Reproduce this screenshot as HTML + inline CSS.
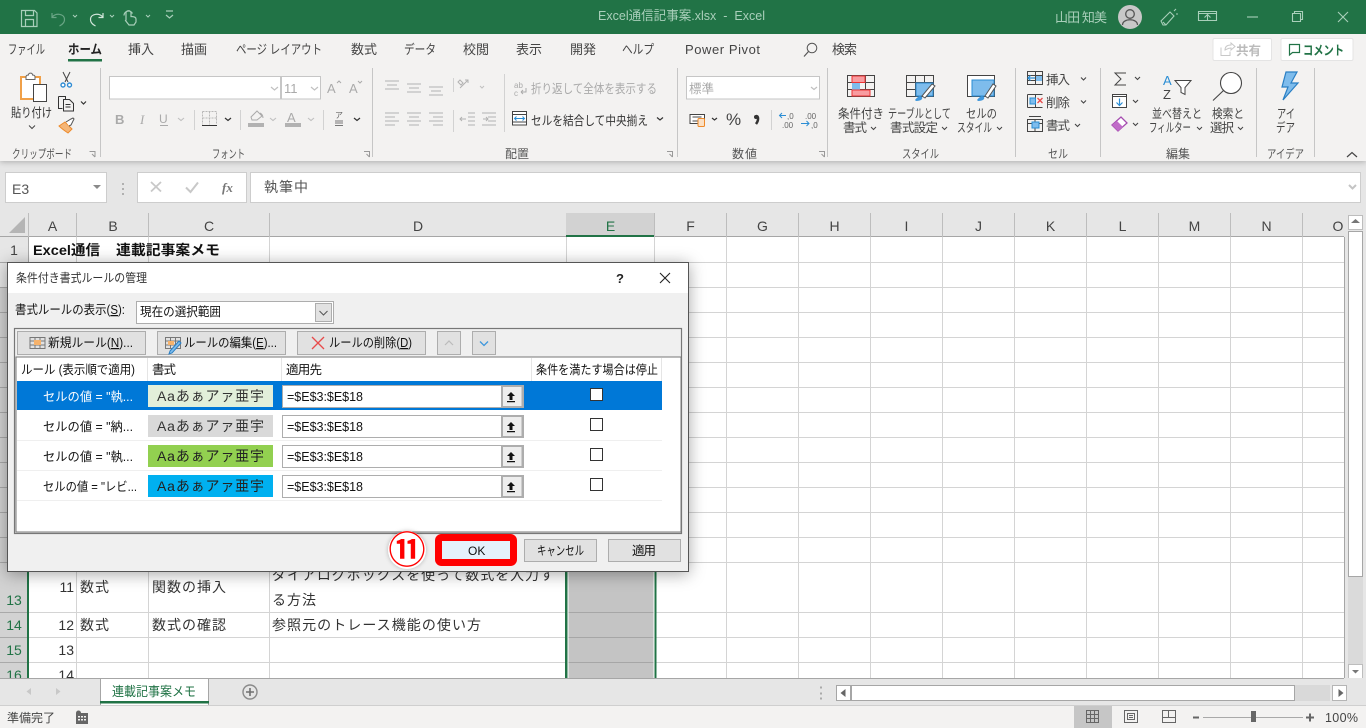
<!DOCTYPE html>
<html lang="ja"><head><meta charset="utf-8"><title>Excel通信記事案.xlsx - Excel</title>
<style>
html,body{margin:0;padding:0;width:1366px;height:728px;overflow:hidden;background:#e6e6e6}
svg{display:block}
text{font-family:"Liberation Sans","Noto Sans CJK JP",sans-serif;font-size:12px;fill:#444;white-space:pre}
.d{fill:#aaa;font-size:12.500px}.k{fill:#262626}.r{font-size:12.500px;fill:#444}.c{font-size:14px;fill:#333}.h{font-size:14px;fill:#444;text-anchor:middle}
.g{fill:#217346}.dl{fill:#111;font-size:12.500px}
.tt{fill:#a9cfba;font-size:13px}.tb{font-size:13px}.gl{font-size:12px;fill:#555}
</style></head><body>
<svg width="1366" height="728" viewBox="0 0 1366 728" xmlns="http://www.w3.org/2000/svg">
<rect width="1366" height="728" fill="#e6e6e6"/>
<!-- sheet -->
<rect x="29" y="237" width="1315" height="441" fill="#fff"/>
<rect x="568" y="287" width="86" height="391" fill="#c4c4c4"/>
<path d="M76.500 237V678M148.500 237V678M269.500 237V678M726.500 237V678M798.500 237V678M870.500 237V678M942.500 237V678M1014.500 237V678M1086.500 237V678M1158.500 237V678M1230.500 237V678M1302.500 237V678M566.500 237V287M654.500 237V287" stroke="#d4d4d4" fill="none"/>
<path d="M29 262.500H1344M29 287.500H1344M29 312.500H1344M29 337.500H1344M29 362.500H1344M29 387.500H1344M29 412.500H1344M29 437.500H1344M29 462.500H1344M29 487.500H1344M29 512.500H1344M29 537.500H1344M29 562.500H1344M29 612.500H1344M29 637.500H1344M29 662.500H1344" stroke="#d4d4d4" fill="none"/>
<path d="M568 562.500H654M568 612.500H654M568 637.500H654M568 662.500H654" stroke="#a6a6a6"/>
<rect x="565" y="287" width="2.500" height="391" fill="#217346"/><rect x="567.500" y="287" width="1" height="391" fill="#fff"/>
<rect x="653.500" y="287" width="1" height="391" fill="#fff"/><rect x="654.500" y="287" width="2" height="391" fill="#217346"/>
<!-- headers -->
<rect x="0" y="213" width="1344" height="24" fill="#e6e6e6"/>
<rect x="566" y="213" width="88" height="24" fill="#d2d2d2"/>
<rect x="566" y="235" width="89" height="2" fill="#217346"/>
<path d="M0 236.500H566M655 236.500H1344" stroke="#a6a6a6"/>
<path d="M28.500 213V237M76.500 213V237M148.500 213V237M269.500 213V237M654.500 213V237M726.500 213V237M798.500 213V237M870.500 213V237M942.500 213V237M1014.500 213V237M1086.500 213V237M1158.500 213V237M1230.500 213V237M1302.500 213V237" stroke="#bdbdbd"/>
<path d="M25 217V233H9Z" fill="#b5b5b5"/>
<text class="h" x="52.500" y="231">A</text><text class="h" x="113" y="231">B</text><text class="h" x="209" y="231">C</text><text class="h" x="418" y="231">D</text><text class="h g" x="610.500" y="231" style="fill:#217346">E</text><text class="h" x="690.500" y="231">F</text><text class="h" x="762.500" y="231">G</text><text class="h" x="834.500" y="231">H</text><text class="h" x="906.500" y="231">I</text><text class="h" x="978.500" y="231">J</text><text class="h" x="1050.500" y="231">K</text><text class="h" x="1122.500" y="231">L</text><text class="h" x="1194.500" y="231">M</text><text class="h" x="1266.500" y="231">N</text><text class="h" x="1338" y="231">O</text>
<!-- row headers -->
<rect x="0" y="237" width="28" height="50" fill="#e6e6e6"/><rect x="0" y="287" width="27" height="391" fill="#d2d2d2"/><rect x="27" y="287" width="2" height="391" fill="#217346"/>
<path d="M0 262.500H28M0 287.500H27M0 312.500H27M0 337.500H27M0 362.500H27M0 387.500H27M0 412.500H27M0 437.500H27M0 462.500H27M0 487.500H27M0 512.500H27M0 537.500H27M0 562.500H27M0 612.500H27M0 637.500H27M0 662.500H27" stroke="#a9a9a9"/>
<path d="M28.500 237V287" stroke="#a9a9a9"/>
<text class="h" x="14" y="255">1</text>
<text class="h g" x="14" y="605" style="fill:#217346">13</text><text class="h" x="14" y="630" style="fill:#217346">14</text><text class="h" x="14" y="655" style="fill:#217346">15</text><text class="h" x="14" y="680" style="fill:#217346">16</text>
<!-- cells -->
<text x="33" y="255" font-weight="700" style="font-size:14px;fill:#111" textLength="67" lengthAdjust="spacingAndGlyphs">Excel通信</text>
<text x="116" y="255" font-weight="700" style="font-size:14px;fill:#111" textLength="104" lengthAdjust="spacingAndGlyphs">連載記事案メモ</text>
<text class="c" x="74" y="592" text-anchor="end">11</text><text class="c" x="80" y="592" textLength="29">数式</text><text class="c" x="152" y="592" textLength="74">関数の挿入</text>
<text class="c" x="272" y="580" textLength="282">ダイアログボックスを使って数式を入力す</text><text class="c" x="272" y="605" textLength="44">る方法</text>
<text class="c" x="74" y="630" text-anchor="end">12</text><text class="c" x="80" y="630" textLength="29">数式</text><text class="c" x="152" y="630" textLength="74">数式の確認</text><text class="c" x="272" y="630" textLength="209">参照元のトレース機能の使い方</text>
<text class="c" x="74" y="655" text-anchor="end">13</text><text class="c" x="74" y="680" text-anchor="end">14</text>
<!-- right edge + v scrollbar -->
<rect x="1344" y="213" width="22" height="493" fill="#e6e6e6"/>
<path d="M1344.500 237V678" stroke="#a6a6a6"/>
<rect x="1348" y="231" width="15" height="434" fill="#dadada"/>
<rect x="1348.500" y="215.500" width="14" height="14" fill="#fff" stroke="#bdbdbd"/><path d="M1351 223L1355.500 219L1360 223Z" fill="#777"/>
<rect x="1348.500" y="231.500" width="14" height="345" fill="#fff" stroke="#a6a6a6"/>
<rect x="1348.500" y="664.500" width="14" height="14" fill="#fff" stroke="#bdbdbd"/><path d="M1352 670H1359L1355.500 673.500Z" fill="#777"/>
<!-- tab bar -->
<rect x="0" y="678" width="1366" height="28" fill="#e6e6e6"/>
<path d="M0 678.500H100M208 678.500H1344" stroke="#a6a6a6"/>
<path d="M31 688L26.500 691.500L31 695ZM56 688L60.500 691.500L56 695Z" fill="#c8c8c8"/>
<path d="M100.500 705V678.500H208.500V705" fill="#fff" stroke="#a6a6a6"/>
<rect x="100" y="701" width="109" height="2.500" fill="#217346"/>
<text x="112" y="696" style="fill:#217346;font-size:13px" textLength="84" lengthAdjust="spacingAndGlyphs">連載記事案メモ</text>
<circle cx="250" cy="692" r="7" fill="none" stroke="#8a8a8a" stroke-width="1.400"/><path d="M250 688V696M246 692H254" stroke="#707070" stroke-width="1.600"/>
<path d="M820 688h2v2h-2zM820 694h2v2h-2zM820 699h2v2h-2z" fill="#aaa" transform="translate(0,-1.500)"/>
<rect x="836.500" y="685.500" width="14" height="15" fill="#fff" stroke="#a6a6a6"/><path d="M845.500 689L840.500 693L845.500 697Z" fill="#666"/>
<rect x="851.500" y="685.500" width="443" height="15" fill="#fff" stroke="#a6a6a6"/>
<rect x="1295" y="685" width="35" height="16" fill="#d9d9d9"/>
<rect x="1332.500" y="685.500" width="14" height="15" fill="#fff" stroke="#b5b5b5"/><path d="M1338.500 689L1343.500 693L1338.500 697Z" fill="#666"/>
<!-- status -->
<rect x="0" y="706" width="1366" height="22" fill="#f3f2f1"/><path d="M0 705.500H1366" stroke="#cfcfcf"/>
<text x="7" y="722" textLength="48">準備完了</text>
<g fill="#666"><circle cx="78.500" cy="713" r="2.500"/><path d="M76 713h12v11H76zM78 716v1.500h2V716zm3 0v1.500h2V716zm3 0v1.500h2V716zM78 719v1.500h2V719zm3 0v1.500h2V719zm3 0v1.500h2V719z" fill-rule="evenodd"/></g>
<rect x="1074" y="706" width="38" height="22" fill="#c6c6c6"/>
<path d="M1086.500 710.500h12v12h-12zM1090.500 710.500v12M1094.500 710.500v12M1086.500 714.500h12M1086.500 718.500h12" fill="none" stroke="#666"/>
<path d="M1124.500 710.500h13v12h-13zM1127.500 713.500h7v6h-7zM1129 715.500h4M1129 717.500h4" fill="none" stroke="#666"/>
<path d="M1162.500 710.500h13v12h-13zM1168.500 710.500v7h7M1162.500 717.500h6" fill="none" stroke="#666"/>
<path d="M1193 717.500h6" stroke="#666" stroke-width="2"/><path d="M1203 717.500h100" stroke="#a9a9a9"/><rect x="1251" y="711" width="5" height="11" fill="#666"/>
<path d="M1306 717.500h8M1310 713.500v8" stroke="#666" stroke-width="2"/>
<text x="1325" y="722" style="font-size:12.500px" textLength="33">100%</text>
<!-- formula bar -->
<rect x="5.500" y="172.500" width="101" height="30" fill="#fff" stroke="#cdcdcd"/><text x="12" y="194" style="font-size:14px;fill:#555">E3</text><path d="M93 185h8l-4 4z" fill="#8a8a8a"/>
<path d="M122 183h2v2h-2zM122 188h2v2h-2zM122 193h2v2h-2z" fill="#b0b0b0"/>
<rect x="137.500" y="172.500" width="109" height="30" fill="#fff" stroke="#cdcdcd"/>
<path d="M151 182L161 191.500M161 182L151 191.500" stroke="#c8c8c8" stroke-width="1.800"/><path d="M186 187.500L190.500 192L198 182.500" stroke="#c8c8c8" stroke-width="2" fill="none"/>
<text x="222" y="192" style="font-family:'Liberation Serif',serif;font-size:13px;font-style:italic;font-weight:700;fill:#777">fx</text>
<rect x="250.500" y="172.500" width="1110" height="30" fill="#fff" stroke="#cdcdcd"/><text x="264" y="192" style="font-size:14px;fill:#555" textLength="44">執筆中</text>
<path d="M1349 185l3.500 3.500 3.500-3.500" stroke="#c4c4c4" stroke-width="2" fill="none"/>
<!-- ribbon -->
<rect x="0" y="34" width="1366" height="127" fill="#f3f2f1" style="filter:drop-shadow(0 1px 3px rgba(0,0,0,.25))"/>
<rect width="1366" height="34" fill="#217346"/>
<!-- titlebar icons -->
<g fill="none" stroke="#a9cfba" stroke-width="1.200">
<path d="M21.500 10.500h13l2.500 2.500v13.500h-15.500zM25.500 10.500v5h8v-5M25.500 26.500v-7h8v7"/>
<path d="M52 13l0 4.500h4.500M52 17.500c3-5 12-4 12.500 1.500.3 3-2 5.500-5 7" stroke="#6aa585"/>
<path d="M73 15l2 2 2-2M110 15l2 2 2-2M146 15l2 2 2-2" stroke-width="1"/>
<path d="M103 13v4.500h-4.500M103 17.500c-3-5-12-4-12.500 1.500-.3 3 2 5.500 5 7" stroke="#d2e6db"/>
<path d="M126 20v-7c0-3 5-3 5 0v3.500c3 0 5 .5 5 2.500v3l-2 3h-5l-3.500-4.500zM124 15.500a4.500 4.500 0 0 1 8.500-2"/>
<path d="M166 11h7M166 15l3.500 3 3.500-3"/>
</g>
<text class="tt" x="598" y="20" textLength="167" lengthAdjust="spacingAndGlyphs">Excel通信記事案.xlsx  -  Excel</text>
<text class="tt" x="1055" y="22" textLength="52">山田 知美</text>
<circle cx="1130" cy="17" r="12" fill="#c8c8c8"/><circle cx="1130" cy="14" r="4.300" fill="none" stroke="#555" stroke-width="1.300"/><path d="M1122.500 25c0-7 15-7 15 0" fill="none" stroke="#555" stroke-width="1.300"/>
<g fill="none" stroke="#a9cfba" stroke-width="1.100">
<path d="M1161 21l9-9 4 4-8 9-3 0zM1166 25l-3-3M1174 11l2-2M1176 14h2"/>
<path d="M1198.500 11.500h18v9h-18zM1198.500 13.500h18M1207.500 20.500v-5M1204.500 17.500l3-3 3 3"/>
<path d="M1247 17h11"/><path d="M1292.500 13.500h8v8h-8zM1294.500 13.500v-2h8v8h-2"/>
<path d="M1338 12l10 10M1348 12l-10 10"/></g>
<!-- tabs -->
<text class="tb" x="8" y="54" textLength="37" lengthAdjust="spacingAndGlyphs">ファイル</text>
<text class="tb" x="68" y="54" font-weight="700" style="fill:#222" textLength="34" lengthAdjust="spacingAndGlyphs">ホーム</text><rect x="68" y="59" width="34" height="2.500" fill="#217346"/>
<text class="tb" x="128" y="54" textLength="26">挿入</text><text class="tb" x="181" y="54" textLength="26">描画</text><text class="tb" x="236" y="54" textLength="86" lengthAdjust="spacingAndGlyphs">ページ レイアウト</text><text class="tb" x="351" y="54" textLength="26">数式</text><text class="tb" x="404" y="54" textLength="32" lengthAdjust="spacingAndGlyphs">データ</text><text class="tb" x="463" y="54" textLength="26">校閲</text><text class="tb" x="516" y="54" textLength="26">表示</text><text class="tb" x="570" y="54" textLength="26">開発</text><text class="tb" x="622" y="54" textLength="32" lengthAdjust="spacingAndGlyphs">ヘルプ</text><text class="tb" x="685" y="54" textLength="75">Power Pivot</text>
<circle cx="812" cy="48" r="4.800" fill="none" stroke="#555"/><path d="M808.500 51.500L804 56.500" stroke="#555" stroke-width="1.200"/>
<text class="tb" x="832" y="54" textLength="25">検索</text>
<rect x="1213" y="38.500" width="58.500" height="22" rx="1.500" fill="#fff" stroke="#e4e4e4"/><path d="M1221 47.500v8h9v-4M1225 50c0-4 3-5 6-5v-2l4 3.500-4 3.500v-2c-3 0-4 1-6 2z" fill="none" stroke="#c8c8c8"/><text x="1236" y="55" font-weight="700" textLength="25" style="fill:#bbb;font-size:12.500px">共有</text>
<rect x="1281" y="38.500" width="72" height="22" rx="1.500" fill="#fff" stroke="#e4e4e4"/><path d="M1289.500 44.500h10v8h-7l-3 2.500z" fill="none" stroke="#217346" stroke-width="1.200"/><text x="1303" y="55" font-weight="700" style="fill:#217346;font-size:13px" textLength="41" lengthAdjust="spacingAndGlyphs">コメント</text>
<!-- separators -->
<path d="M100.500 68V157M372.500 68V157M677.500 68V157M827.500 68V157M1015.500 68V157M1100.500 68V157M1256.500 68V157M1314.500 68V157" stroke="#c6c6c6"/>
<path d="M194.500 110V130M240.500 110V130M323.500 110V130M453.500 78V92M453.500 110V132M504.500 74V132M771.500 110V130" stroke="#d2d2d2"/>
<!-- group labels -->
<text class="gl" x="12" y="158" textLength="60" lengthAdjust="spacingAndGlyphs">クリップボード</text><text class="gl" x="212" y="158" textLength="33" lengthAdjust="spacingAndGlyphs">フォント</text><text class="gl" x="505" y="158" textLength="24">配置</text><text class="gl" x="732" y="158" textLength="25">数値</text><text class="gl" x="902" y="158" textLength="37" lengthAdjust="spacingAndGlyphs">スタイル</text><text class="gl" x="1048" y="158" textLength="20" lengthAdjust="spacingAndGlyphs">セル</text><text class="gl" x="1166" y="158" textLength="24">編集</text><text class="gl" x="1267" y="158" textLength="37" lengthAdjust="spacingAndGlyphs">アイデア</text>
<path d="M89.500 151.500h5.500v5.500M92 154l3 3M364 151.500h5.500v5.500M366.500 154l3 3M667 151.500h5.500v5.500M669.500 154l3 3M819 151.500h5.500v5.500M821.500 154l3 3" stroke="#999" fill="none"/>
<path d="M1347 157l5-4.500 5 4.500" stroke="#444" stroke-width="1.200" fill="none"/>
<!-- clipboard -->
<rect x="21" y="77" width="19" height="22" fill="#fff" stroke="#f0a048" stroke-width="2"/><path d="M26 77c0-2 1.500-2 2.500-2 0-2.500 4-2.500 4 0 1 0 2.500 0 2.500 2v2.500h-9z" fill="#fff" stroke="#666"/>
<rect x="33.500" y="84.500" width="13" height="17" fill="#fff" stroke="#444"/>
<text x="11" y="117" class="r" textLength="41" lengthAdjust="spacingAndGlyphs" style="fill:#333">貼り付け</text>
<path d="M29 125.500l3 3 3-3" fill="none" stroke="#444"/>
<path d="M63 72l5 10M70 72l-5 10" stroke="#444" fill="none"/><circle cx="63" cy="85" r="2" fill="#fff" stroke="#2e8bd3" stroke-width="1.400"/><circle cx="69.500" cy="85" r="2" fill="#fff" stroke="#2e8bd3" stroke-width="1.400"/>
<path d="M58.500 96.500h7v3M58.500 96.500v12h4M63.500 99.500h6l4 4v7.500h-10zM65.500 104.500h5M65.500 107h5" fill="none" stroke="#333"/>
<path d="M81 101.500l2.500 2.500 2.500-2.500" fill="none" stroke="#333" stroke-width="1.200"/>
<path d="M59 126l6-4 7 7-4 4c-3-2-6-4-9-7z" fill="#f4b678" stroke="#ee8a2a"/><path d="M66 122l5-3 2-1 1 1-1 2-2 4-2 1" fill="#fff" stroke="#555"/>
<!-- font -->
<rect x="109.500" y="76.500" width="171" height="22.500" fill="#fff" stroke="#c6c6c6"/><rect x="281.500" y="76.500" width="39" height="22.500" fill="#fff" stroke="#c6c6c6"/>
<path d="M271 87l3.500 3 3.500-3M311 87l3.500 3 3.500-3" fill="none" stroke="#c0c0c0" stroke-width="1.200"/>
<text x="284" y="93" style="font-size:13px;fill:#aaa">11</text>
<text x="327" y="93" style="font-size:13px;fill:#aaa">A</text><text x="349" y="93" style="font-size:13px;fill:#aaa">A</text>
<path d="M337 83l2-2 2 2M358 81l2 2 2-2" fill="none" stroke="#aaa"/>
<text x="115" y="124" font-weight="700" style="font-size:13px;fill:#aaa">B</text><text x="140" y="124" style="font-size:13px;font-style:italic;font-family:'Liberation Serif',serif;fill:#aaa">I</text><text x="159" y="123" style="font-size:12px;fill:#aaa">U</text><path d="M160 125.500h8" stroke="#aaa"/>
<path d="M178 118l3 2.500 3-2.500M270 118l3 2.500 3-2.500M308 118l3 2.500 3-2.500" fill="none" stroke="#c0c0c0" stroke-width="1.100"/>
<path d="M202.500 111.500h14v13M202.500 111.500v13M209.500 111.500v13M202.500 118h14" fill="none" stroke="#b8b8b8" stroke-dasharray="2 1"/><path d="M202 125.500h15" stroke="#333"/>
<path d="M225 118l3 2.500 3-2.500M354 118l3 2.500 3-2.500" fill="none" stroke="#333" stroke-width="1.200"/>
<path d="M251 117l6-6 5 5-5 4h-5zM260 113c2 1 3 3 3 5" fill="none" stroke="#aaa"/><rect x="248" y="123" width="16" height="4" fill="#b2b2b2"/>
<text x="287" y="122" style="font-size:13px;fill:#aaa">A</text><rect x="285" y="123" width="16" height="4" fill="#b2b2b2"/>
<text x="335" y="118" style="font-size:8px;fill:#666">ア</text><path d="M335 121h8M335 123h8M335 125.500h8" stroke="#777"/>
<!-- align -->
<path d="M385 81h14M387 85h10M385 89h14M407 84h14M409 88h10M407 92h14M429 87h14M431 91h10M429 95h14M385 113h14M385 117h10M385 121h14M385 125h10M407 113h14M409 117h10M407 121h14M409 125h10M429 113h14M433 117h10M429 121h14M433 125h10M468 113h7M468 117h7M468 121h7M468 125h7M482 113h14M488 117h8M488 121h8M482 125h14" stroke="#b2b2b2"/>
<path d="M460 88l8-8M465 80h3v3M460 80l3 3-2 2-3-3z" stroke="#b2b2b2" fill="none"/><path d="M480 86l2 2 2-2" stroke="#c0c0c0" fill="none"/>
<path d="M466 119h-6M462 117l-2 2 2 2M483 119h5M486 117l2 2-2 2" stroke="#b2b2b2" fill="none"/>
<text x="514" y="88" style="font-size:8px;fill:#aaa">ab</text><text x="514" y="96" style="font-size:8px;fill:#aaa">c</text><path d="M521 92h5v-4M521 92l2-2M521 92l2 2" stroke="#aaa" fill="none"/>
<text x="531" y="93" class="d" textLength="126" lengthAdjust="spacingAndGlyphs">折り返して全体を表示する</text>
<rect x="512.500" y="111.500" width="14" height="13.500" fill="#fff" stroke="#444"/><path d="M513 114.500h13M513 122h13" stroke="#444"/><path d="M514.500 118.500h10M516.500 116.500l-2 2 2 2M522.500 116.500l2 2-2 2" stroke="#2a8dd4" fill="none"/>
<text x="531" y="125" class="r" style="fill:#333" textLength="117" lengthAdjust="spacingAndGlyphs">セルを結合して中央揃え</text>
<path d="M657 117.500l3 2.500 3-2.500" fill="none" stroke="#333" stroke-width="1.200"/>
<!-- number -->
<rect x="686.500" y="76.500" width="133" height="22.500" fill="#fff" stroke="#c6c6c6"/><text x="689" y="93" class="d" textLength="25">標準</text><path d="M811 87l3 2.500 3-2.500" fill="none" stroke="#c0c0c0" stroke-width="1.200"/>
<rect x="690" y="114.500" width="14.500" height="9" fill="#fff" stroke="#444"/><path d="M692.500 117h9M692.500 121h5" stroke="#444"/><rect x="697.500" y="119" width="7" height="7.500" fill="#fff"/><rect x="698" y="118.500" width="6.500" height="8" rx="1" fill="#fbe0c4" stroke="#ee8a2a"/>
<path d="M712 118l2.500 2 2.500-2" fill="none" stroke="#333" stroke-width="1.200"/>
<text x="726" y="125" style="font-size:17px;fill:#444">%</text>
<path d="M756 116c2.500 0 3 4 0 8" fill="none" stroke="#333" stroke-width="2.500"/><circle cx="756" cy="117" r="2" fill="#333"/>
<text x="787" y="119" style="font-size:8px;fill:#666">,0</text><text x="782" y="128" style="font-size:8px;fill:#666">.00</text><path d="M786 115.500h-6M782 113l-2.500 2.500 2.500 2.500" fill="none" stroke="#2a8dd4"/>
<text x="805" y="119" style="font-size:8px;fill:#666">.00</text><text x="811" y="128" style="font-size:8px;fill:#666">,0</text><path d="M801 123.500h8M806.500 121l2.500 2.500-2.500 2.500" fill="none" stroke="#2a8dd4"/>
<!-- conditional -->
<path d="M847.500 75.500h27v21h-27zM847.500 82.500h27M847.500 89.500h27M856.500 75.500v21M865.500 75.500v21" fill="none" stroke="#444"/><rect x="852" y="76" width="13" height="6.500" fill="#f89ca0" stroke="#e33"/><rect x="852" y="83" width="8" height="6.500" fill="#7ebcec"/><rect x="852" y="90" width="18" height="6" fill="#f89ca0" stroke="#e33"/>
<text x="838" y="118" class="r" textLength="46" lengthAdjust="spacingAndGlyphs">条件付き</text><text x="843" y="132" class="r" textLength="24">書式</text><path d="M871 127l2.500 2.500 2.500-2.500M942 127l2.500 2.500 2.500-2.500M997 127l2.500 2.500 2.500-2.500M1197 127l2.500 2.500 2.500-2.500M1238 127l2.500 2.500 2.500-2.500" fill="none" stroke="#444"/>
<!-- table -->
<path d="M906.500 75.500h27v21h-27zM906.500 82.500h27M906.500 89.500h27M915.500 75.500v21M924.500 75.500v21" fill="none" stroke="#444"/><rect x="916" y="83" width="17" height="13" fill="#7ebcec" stroke="#2a8dd4"/><path d="M922 96l10-12 3 2-10 12z" fill="#fff" stroke="#555"/><path d="M915 100c3-4 5-4 7-3 1 2-1 4-6 4z" fill="#3f97dc"/>
<text x="888" y="118" class="r" textLength="63" lengthAdjust="spacingAndGlyphs">テーブルとして</text><text x="890" y="132" class="r" textLength="48">書式設定</text>
<!-- cell style -->
<rect x="967.500" y="75.500" width="27" height="21" fill="#fff" stroke="#444"/><rect x="972" y="80" width="22" height="16" fill="#7ebcec" stroke="#2a8dd4"/><path d="M985 96l8-12 3 2-8 12z" fill="#fff" stroke="#555"/><path d="M977 100c3-4 5-4 7-3 1 2-1 4-6 4z" fill="#3f97dc"/>
<text x="966" y="118" class="r" textLength="31" lengthAdjust="spacingAndGlyphs">セルの</text><text x="957" y="132" class="r" textLength="35" lengthAdjust="spacingAndGlyphs">スタイル</text>
<!-- cells group -->
<path d="M1027.500 71.500h15v13h-15zM1027.500 75.500h15M1027.500 80.500h15M1035.500 71.500v13" fill="none" stroke="#444"/><rect x="1036" y="76" width="6" height="5" fill="#7ebcec"/><path d="M1035 78h-7M1030.500 75.500l-2.500 2.500 2.500 2.500" fill="none" stroke="#2a8dd4" stroke-width="1.200"/>
<text x="1046" y="84" class="r" textLength="24">挿入</text><path d="M1081 77.500l2.500 2.500 2.500-2.500M1081 100.500l2.500 2.500 2.500-2.500M1075 124l2.500 2.500 2.500-2.500" fill="none" stroke="#444" stroke-width="1.100"/>
<path d="M1027.500 94.500h15M1027.500 107.500h15M1027.500 94.500v13M1035.500 94.500v3M1035.500 104.500v3" fill="none" stroke="#444"/><rect x="1030" y="98" width="5.500" height="6" fill="#7ebcec" stroke="#2a8dd4"/><path d="M1037.500 98l5 5M1042.500 98l-5 5" stroke="#e84a4a" stroke-width="1.300"/>
<text x="1046" y="107" class="r" textLength="24">削除</text>
<path d="M1027.500 119.500h15v12h-15zM1027.500 123.500h15M1035 119.500v12M1029 116.500h12" fill="none" stroke="#444"/><rect x="1032" y="122" width="7" height="6" fill="#7ebcec" stroke="#2a8dd4"/>
<text x="1046" y="130" class="r" textLength="24">書式</text>
<!-- edit -->
<path d="M1126 73h-11l6 6-6 6h11" fill="none" stroke="#444"/><path d="M1135 77l2.500 2.500 2.500-2.500M1133 100l2.500 2.500 2.500-2.500M1133 123l2.500 2.500 2.500-2.500" fill="none" stroke="#444" stroke-width="1.100"/>
<rect x="1112.500" y="94.500" width="14" height="13" fill="#fff" stroke="#444"/><path d="M1112.500 96.500h14" stroke="#444"/><path d="M1119.500 98.500v7M1116.500 102.500l3 3 3-3" fill="none" stroke="#2a8dd4" stroke-width="1.200"/>
<path d="M1112 125l9-8 6 6-9 8z" fill="#fff" stroke="#a54cb0" stroke-width="1.300"/><path d="M1112 125l5-4 6 6-5 4z" fill="#c06cc8"/>
<text x="1163" y="85" style="font-size:13px;fill:#2a8dd4">A</text><text x="1163" y="99" style="font-size:13px;fill:#444">Z</text>
<path d="M1175 80.500h16l-6 7v7l-4-2v-5z" fill="#fff" stroke="#444"/>
<text x="1152" y="118" class="r" textLength="50" lengthAdjust="spacingAndGlyphs">並べ替えと</text><text x="1149" y="132" class="r" textLength="42" lengthAdjust="spacingAndGlyphs">フィルター</text>
<circle cx="1231" cy="83" r="10.500" fill="#fff" stroke="#444" stroke-width="1.100"/><path d="M1223.500 90.500L1213 100.500" stroke="#444" stroke-width="1.100"/>
<text x="1212" y="118" class="r" textLength="32" lengthAdjust="spacingAndGlyphs">検索と</text><text x="1210" y="132" class="r" textLength="24">選択</text>
<path d="M1286 72h11l-6 11h7l-15 17 5-13h-6z" fill="#7ebcec" stroke="#2a7fc4" stroke-width="1.200"/>
<text x="1277" y="118" class="r" textLength="18" lengthAdjust="spacingAndGlyphs">アイ</text><text x="1276" y="132" class="r" textLength="19" lengthAdjust="spacingAndGlyphs">デア</text>
<!-- dialog -->
<g style="filter:drop-shadow(0 2px 8px rgba(0,0,0,.35))"><rect x="7.500" y="262.500" width="681" height="309" fill="#f0f0f0" stroke="#555"/></g>
<rect x="8" y="263" width="680" height="30" fill="#fff"/>
<text x="16" y="282" style="font-size:12px;fill:#333" textLength="131" lengthAdjust="spacingAndGlyphs">条件付き書式ルールの管理</text>
<text x="616" y="283" style="font-size:13px;fill:#222" font-weight="700">?</text><path d="M660 273l10 10M670 273l-10 10" stroke="#222" stroke-width="1.100"/>
<text x="15" y="314" class="dl" textLength="110" lengthAdjust="spacingAndGlyphs">書式ルールの表示(<tspan text-decoration="underline">S</tspan>):</text>
<rect x="136.500" y="301.500" width="197" height="22" fill="#fff" stroke="#adadad"/><text x="140" y="316" class="dl" textLength="81" lengthAdjust="spacingAndGlyphs">現在の選択範囲</text>
<rect x="315.500" y="303.500" width="16" height="18" fill="#e2e2e2" stroke="#adadad"/><path d="M319.500 311l4 4 4-4" fill="none" stroke="#555"/>
<rect x="14.500" y="328.500" width="667" height="205" fill="#f0f0f0" stroke="#777" stroke-width="1.200"/>
<rect x="16" y="357" width="665" height="175" fill="#fff" stroke="#777" stroke-width="1"/>
<g fill="#e1e1e1" stroke="#adadad"><rect x="17.500" y="331.500" width="128" height="23"/><rect x="157.500" y="331.500" width="128" height="23"/><rect x="297.500" y="331.500" width="128" height="23"/><rect x="437.500" y="331.500" width="23" height="23"/><rect x="472.500" y="331.500" width="23" height="23"/></g>
<path d="M30 337.500h15v11H30zM35 337.500v11M40 337.500v11M30 341h15M30 345h15" fill="none" stroke="#777"/><rect x="34" y="340" width="7" height="5" fill="#f6b26b"/>
<text x="48" y="347" class="dl" textLength="85" lengthAdjust="spacingAndGlyphs">新規ルール(<tspan text-decoration="underline">N</tspan>)...</text>
<path d="M165.500 337.500h15v11h-15zM170.500 337.500v11M175.500 337.500v11M165.500 341h15M165.500 345h15" fill="none" stroke="#777"/><path d="M170 351l9-10 2 2-9 10-3 1z" fill="#7ebcec" stroke="#2a7fc4"/><rect x="168" y="341" width="6" height="4" fill="#f6b26b"/>
<text x="184" y="347" class="dl" textLength="93" lengthAdjust="spacingAndGlyphs">ルールの編集(<tspan text-decoration="underline">E</tspan>)...</text>
<path d="M312 337l12 12M324 337l-12 12" stroke="#e84a4a" stroke-width="1.300"/>
<text x="329" y="347" class="dl" textLength="83" lengthAdjust="spacingAndGlyphs">ルールの削除(<tspan text-decoration="underline">D</tspan>)</text>
<path d="M445 345l4-4 4 4" fill="none" stroke="#bbb" stroke-width="1.200"/><path d="M480 341.500l4 4 4-4" fill="none" stroke="#3f97dc" stroke-width="1.300"/>
<path d="M147.500 358V381M281.500 358V381M531.500 358V381M661.500 358V381" stroke="#e5e5e5"/>
<text x="21" y="374" class="dl" textLength="114" lengthAdjust="spacingAndGlyphs">ルール (表示順で適用)</text><text x="152" y="374" class="dl" textLength="24">書式</text><text x="286" y="374" class="dl" textLength="36">適用先</text><text x="536" y="374" class="dl" textLength="122" lengthAdjust="spacingAndGlyphs">条件を満たす場合は停止</text>
<rect x="17" y="381" width="645" height="29" fill="#0078d7"/>
<path d="M17 440.500H662M17 470.500H662M17 500.500H662" stroke="#efefef"/>
<text x="43" y="401" style="font-size:12.500px;fill:#fff" textLength="90" lengthAdjust="spacingAndGlyphs">セルの値 = "執...</text><text x="43" y="431" class="dl" textLength="90" lengthAdjust="spacingAndGlyphs">セルの値 = "納...</text><text x="43" y="461" class="dl" textLength="90" lengthAdjust="spacingAndGlyphs">セルの値 = "執...</text><text x="43" y="491" class="dl" textLength="94" lengthAdjust="spacingAndGlyphs">セルの値 = "レビ...</text>
<rect x="148" y="385" width="125" height="22" fill="#e2efda"/><rect x="148" y="415" width="125" height="22" fill="#d9d9d9"/><rect x="148" y="445" width="125" height="22" fill="#92d050"/><rect x="148" y="475" width="125" height="22" fill="#00b0f0"/>
<text x="157" y="401" style="font-size:14px;fill:#333" textLength="107">Aaあぁアァ亜宇</text><text x="157" y="431" style="font-size:14px;fill:#333" textLength="107">Aaあぁアァ亜宇</text><text x="157" y="461" style="font-size:14px;fill:#222" textLength="107">Aaあぁアァ亜宇</text><text x="157" y="491" style="font-size:14px;fill:#222" textLength="107">Aaあぁアァ亜宇</text>
<g fill="#fff" stroke="#adadad"><rect x="282.500" y="385.500" width="241" height="22"/><rect x="282.500" y="415.500" width="241" height="22"/><rect x="282.500" y="445.500" width="241" height="22"/><rect x="282.500" y="475.500" width="241" height="22"/></g>
<g fill="#ededed" stroke="#adadad" stroke-width="2"><rect x="502" y="386" width="20.500" height="21"/><rect x="502" y="416" width="20.500" height="21"/><rect x="502" y="446" width="20.500" height="21"/><rect x="502" y="476" width="20.500" height="21"/></g>
<path d="M511 392l-4 4h2.500v4h3v-4h2.500zM507 401h8v1.200h-8zM511 422l-4 4h2.500v4h3v-4h2.500zM507 431h8v1.200h-8zM511 452l-4 4h2.500v4h3v-4h2.500zM507 461h8v1.200h-8zM511 482l-4 4h2.500v4h3v-4h2.500zM507 491h8v1.200h-8z" fill="#111"/>
<text x="287" y="401" class="dl" textLength="76">=$E$3:$E$18</text><text x="287" y="431" class="dl" textLength="76">=$E$3:$E$18</text><text x="287" y="461" class="dl" textLength="76">=$E$3:$E$18</text><text x="287" y="491" class="dl" textLength="76">=$E$3:$E$18</text>
<g fill="#fff" stroke="#333"><rect x="590.500" y="388.500" width="12" height="12"/><rect x="590.500" y="418.500" width="12" height="12"/><rect x="590.500" y="448.500" width="12" height="12"/><rect x="590.500" y="478.500" width="12" height="12"/></g>
<!-- bottom buttons -->
<rect x="438.500" y="537.500" width="75" height="25" rx="3" fill="#e5f1fb" stroke="#f00" stroke-width="7"/>
<text x="468" y="555" style="font-size:12px;fill:#111">OK</text>
<rect x="524.500" y="539.500" width="72" height="22" fill="#e1e1e1" stroke="#adadad"/><rect x="608.500" y="539.500" width="72" height="22" fill="#e1e1e1" stroke="#adadad"/>
<text x="537" y="555" class="dl" textLength="47" lengthAdjust="spacingAndGlyphs">キャンセル</text><text x="632" y="555" class="dl" textLength="24">適用</text>
<circle cx="407" cy="550" r="19" fill="#fff" style="filter:drop-shadow(0 0 2px rgba(0,0,0,.25))"/>
<text x="407" y="563" text-anchor="middle" font-weight="700" style="font-size:37px;fill:#f00;font-family:'Noto Sans CJK JP',sans-serif">⑪</text>
</svg>
</body></html>
